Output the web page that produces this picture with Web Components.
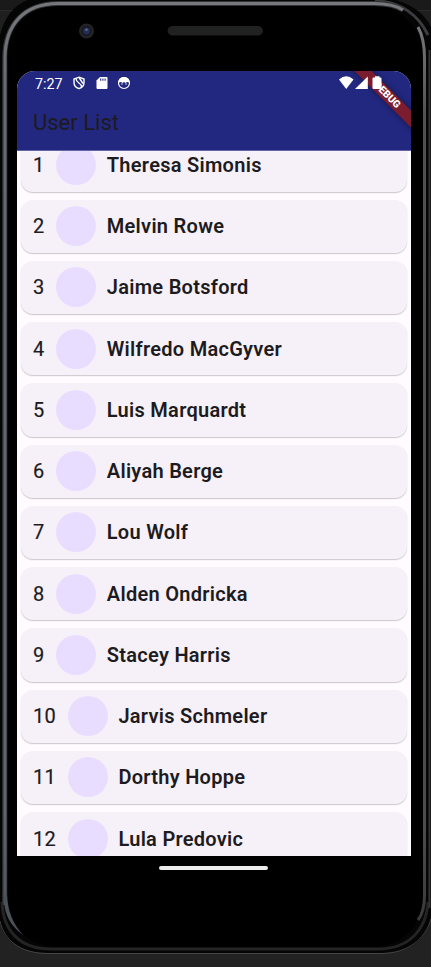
<!DOCTYPE html>
<html lang="en"><head><meta charset="utf-8"><title>User List</title>
<style>html,body{margin:0;height:100%;overflow:hidden;background:#202020}body{font-family:Roboto,"Liberation Sans",sans-serif}</style>
</head><body>
<phone-frame><user-screen></user-screen></phone-frame>
<script>
const define=(name,html,setup)=>customElements.define(name,class extends HTMLElement{
  connectedCallback(){ if(this.shadowRoot)return; this.attachShadow({mode:'open'}).innerHTML=html; if(setup)setup(this,this.shadowRoot); }
});

define('phone-frame',`<style>
:host{display:block;position:relative;width:431px;height:967px;background:linear-gradient(#1a1a1a 10px,#2a2a2a 10px 11px,#1f1f1f 11px 900px,#222 940px);overflow:hidden}
svg.body{position:absolute;inset:0}
.inner{position:relative;display:grid;grid-template-rows:71px 785px auto;padding:0 20px 0 17px}
.top{position:relative}
.top svg{position:absolute;left:-17px;top:0}
.nav{justify-self:center;width:109px;height:4px;border-radius:2px;background:#ececec;margin:10px 2px 0 0}
</style>
<svg class="body" width="431" height="967" viewBox="0 0 431 967">
<defs>
<linearGradient id="l" x1="0" x2="0" y1="0" y2="1"><stop offset="0" stop-color="#77787b"/><stop offset=".1" stop-color="#66696f"/><stop offset=".9" stop-color="#60646b"/><stop offset="1" stop-color="#50555c"/></linearGradient>
<linearGradient id="r" x1="0" x2="0" y1="0" y2="1"><stop offset="0" stop-color="#77777a"/><stop offset=".1" stop-color="#515155"/><stop offset=".9" stop-color="#4c4c50"/><stop offset="1" stop-color="#39393c"/></linearGradient>
</defs>
<path d="M0 35C5 16 14 5 30-1H392C412 4 425 14 431 27V917C427 939 410 953 382 953H48C20 953 3 940 0 922Z" fill="#050505"/>
<path d="M0 921C4 940 20 953.500 48 953.500H382C407 953 425 940 431 919" fill="none" stroke="#555" stroke-width=".7"/>
<path d="M2 902C3 931 20 949 51 949H378C407 949 426 932 428 902" fill="none" stroke="#242424" stroke-width="3"/>
<path d="M375 1C401 1 419 16 428 35" fill="none" stroke="#3c3c3e" stroke-width="3"/>
<path d="M429.500 50V908" stroke="#343436" stroke-width="2"/>
<path d="M8 895V60C8 29 27 6 58 6H374C402 6 423 29 423 60V894C423 925 403 947 373 947H57C28 947 8 925 8 895Z" fill="#000"/>
<path d="M4.700 903V58C4.700 25 24 3.500 58 3.500H374C389 3.500 397 6 403 10" fill="none" stroke="#303236" stroke-width="5"/>
<path d="M5 905V58C5 25 24 3.500 58 3.500H374C389 3.500 397 6 403 10" fill="none" stroke="url(#l)" stroke-width="3"/>
<path d="M3.500 895C4 915 10 925 23 935C13 924 8 912 7 895Z" fill="#4b5158"/>
<path d="M418 27C423 36 424.500 46 424.500 58V895C424.500 907 422 915 418 920" fill="none" stroke="url(#r)" stroke-width="3"/>
</svg>
<div class="inner">
<div class="top"><svg width="431" height="70"><circle cx="86.500" cy="31" r="7.500" fill="#242426"/><circle cx="86.500" cy="31" r="5" fill="#15171f"/><circle cx="86.500" cy="31" r="3.500" fill="#222d52"/><circle cx="86.500" cy="29.800" r="1.300" fill="#5a6892"/><rect x="168" y="26.500" width="94.500" height="8.500" rx="4.200" fill="#202121" stroke="#262626" stroke-width=".8"/></svg></div>
<slot></slot><div class="nav"></div></div>`);

define('status-bar',`<style>
:host{display:flex;position:relative;z-index:2;height:24px;align-items:center;color:#fff;font-size:14.300px;padding:0 27px 0 18px}
span{width:38px;line-height:24px;padding-top:1.500px}svg{display:block}.gap{flex:1}
</style><span>7:27</span>
<svg width="60" height="24" viewBox="0 0 60 24"><g fill="none" stroke="#fff" stroke-width="1.400"><path d="M6 6.200L11 8V11.500C11 14.500 9 16.700 6 17.700C3 16.700 1 14.500 1 11.500V8Z"/><path d="M3.200 8C3 12.500 8.800 11.500 8.500 16M6 6.500L10 12.500"/></g>
<path d="M27 6H33.500Q34.500 6 34.500 7V17Q34.500 18 33.500 18H24.500Q23.500 18 23.500 17V9.500Z" fill="#fff"/><path d="M27.700 7.500V9.700M29.900 7.500V9.700M32.100 7.500V9.700" stroke="#22287f" stroke-width="1.100"/>
<circle cx="51" cy="12" r="5.500" fill="none" stroke="#fff" stroke-width="1.200"/><path d="M45.500 11.500C45.500 4.300 56.500 4.300 56.500 11.500L54 11L52.500 12L51 11L49.500 12L48 11Z" fill="#fff"/><circle cx="49" cy="13" r=".7" fill="#fff"/><circle cx="53" cy="13" r=".7" fill="#fff"/></svg>
<div class="gap"></div>
<svg width="46" height="24" viewBox="0 0 46 24" fill="#fff"><path d="M1 8.500Q8.200 1.800 15.500 8.500L8.200 18Z"/><path d="M17 18L29.800 5.500V18Z"/><path d="M37 5.200H41.500V6.500H42.500Q43.500 6.500 43.500 7.500V17Q43.500 18 42.500 18H35.500Q34.500 18 34.500 17V7.500Q34.500 6.500 35.500 6.500H37Z"/></svg>`);

define('debug-banner',`<style>
:host{position:absolute;z-index:1;right:0;top:0;width:66px;height:66px;overflow:hidden;pointer-events:none}
div{position:absolute;right:-31.250px;top:17.750px;width:110px;height:12px;line-height:12.500px;background:#7c1c2f;box-shadow:0 0 6px #0007;transform:rotate(45deg);color:#fff;text-align:center;font-weight:900;font-size:10.200px}
</style><div><slot></slot></div>`);

define('user-card',`<style>
:host{display:flex;align-items:center;box-sizing:border-box;height:53.250px;margin:0 4px 8px 3.500px;padding-left:12.500px;border-radius:12px;background:#f6f1f9;box-shadow:0 1px 1px #0000002b,0 1px 2px #0000000d;color:#1d1b20;font-size:20px;letter-spacing:.28px;line-height:24px}
i{width:40px;height:40px;border-radius:50%;background:#e9ddff;margin:0 10.500px 0 11.700px}
b{font-weight:600;white-space:nowrap}span{letter-spacing:.35px;-webkit-text-stroke:.2px}
</style><span></span><i></i><b><slot></slot></b>`,(e,s)=>s.querySelector('span').textContent=e.getAttribute('number'));

define('user-screen',`<style>
:host{display:block;position:relative;height:785px;overflow:hidden;border-radius:18px 18px 0 0;background:#fffbff}
header{position:relative;z-index:1;height:79.500px;background:#22287f;border-bottom:1px solid #6265a2;box-sizing:border-box}
h1{margin:0;padding:12.500px 16px;font-size:22px;line-height:30px;font-weight:400;color:#1d1b20}
main{margin-top:-12.250px}
</style><header><status-bar></status-bar><debug-banner>DEBUG</debug-banner><h1>User List</h1></header><main></main>`,(e,s)=>{
 const main=s.querySelector('main');
 ['Theresa Simonis','Melvin Rowe','Jaime Botsford','Wilfredo MacGyver','Luis Marquardt','Aliyah Berge','Lou Wolf','Alden Ondricka','Stacey Harris','Jarvis Schmeler','Dorthy Hoppe','Lula Predovic'].forEach((n,i)=>{
  const c=document.createElement('user-card');c.setAttribute('number',i+1);c.textContent=n;main.append(c);
 });
});
</script></body></html>
